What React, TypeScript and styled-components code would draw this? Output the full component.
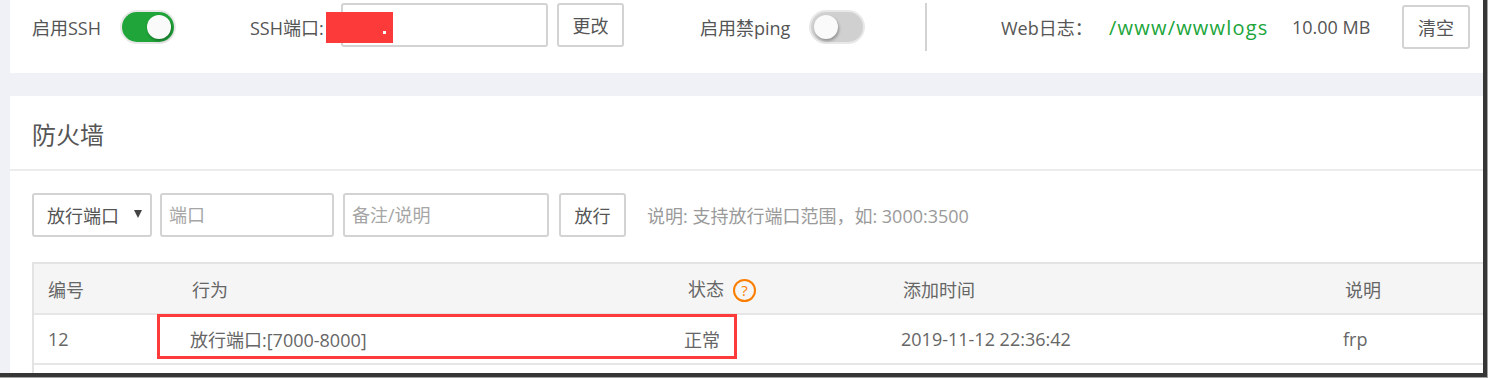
import React from 'react';
import styled, { createGlobalStyle } from 'styled-components';

const Global = createGlobalStyle`
  html, body { margin: 0; padding: 0; }
  body {
    background: #a3a3a3;
    width: 1488px;
    height: 378px;
    overflow: hidden;
    font-family: "Open Sans", "Noto Sans CJK SC", sans-serif;
  }
`;

const Screen = styled.div`
  position: relative;
  box-sizing: border-box;
  width: 1487px;
  height: 377px;
  border-right: 4px solid #363636;
  border-bottom: 4px solid #363636;
  background: #f0f1f6;
  padding-left: 10px;
  display: flex;
  flex-direction: column;
  gap: 23px;
  overflow: hidden;
`;

const TopCard = styled.div`
  box-sizing: border-box;
  height: 73px;
  flex-shrink: 0;
  background: #fff;
  padding: 3px 0 22px 22px;
  display: flex;
  align-items: center;
`;

const Label = styled.span<{ $w: number; $ml?: number; $color?: string; $ls?: number; $size?: number }>`
  flex-shrink: 0;
  width: ${(p) => p.$w}px;
  margin-left: ${(p) => p.$ml ?? 0}px;
  font-size: ${(p) => p.$size ?? 18}px;
  letter-spacing: ${(p) => p.$ls ?? 0}px;
  color: ${(p) => p.$color ?? '#555'};
  white-space: nowrap;
`;

const Toggle = styled.span<{ $on?: boolean }>`
  position: relative;
  flex-shrink: 0;
  box-sizing: border-box;
  width: 52px;
  height: 30px;
  border-radius: 15px;
  background: ${(p) => (p.$on ? '#20a53a' : '#d0d0d0')};
  box-shadow: 0 0 0 2px #e8e8e8;
  &::after {
    content: '';
    position: absolute;
    top: 3px;
    left: ${(p) => (p.$on ? '25px' : '3px')};
    width: 24px;
    height: 24px;
    border-radius: 50%;
    background: #fafafa;
    box-shadow: 1px 2px 3px rgba(0, 0, 0, 0.3);
  }
`;

const Input = styled.input<{ $w: number; $ml?: number; $raise?: boolean }>`
  flex-shrink: 0;
  box-sizing: border-box;
  width: ${(p) => p.$w}px;
  height: 44px;
  margin-left: ${(p) => p.$ml ?? 0}px;
  margin-top: ${(p) => (p.$raise ? '-4px' : '0')};
  border: 2px solid #d3d3d3;
  border-radius: 3px;
  padding: 0 7px;
  font-family: inherit;
  font-size: 18px;
  color: #555;
  background: #fff;
  outline: none;
  &::placeholder { color: #a6a6a6; }
`;

const Button = styled.button<{ $w: number; $ml?: number; $raise?: boolean }>`
  flex-shrink: 0;
  box-sizing: border-box;
  width: ${(p) => p.$w}px;
  height: 44px;
  margin-left: ${(p) => p.$ml ?? 0}px;
  margin-top: ${(p) => (p.$raise ? '-4px' : '0')};
  border: 2px solid #d3d3d3;
  border-radius: 3px;
  background: #fff;
  font-family: inherit;
  font-size: 18px;
  color: #555;
  padding: 0;
`;

const Divider = styled.span<{ $ml: number }>`
  flex-shrink: 0;
  width: 2px;
  height: 48px;
  margin-left: ${(p) => p.$ml}px;
  background: #d2d2d2;
`;

const Panel = styled.div`
  flex: 1;
  background: #fff;
  display: flex;
  flex-direction: column;
  overflow: hidden;
`;

const Title = styled.div`
  box-sizing: border-box;
  height: 75px;
  flex-shrink: 0;
  padding: 2px 0 0 22px;
  border-bottom: 2px solid #ececec;
  display: flex;
  align-items: center;
  font-size: 24px;
  color: #555;
`;

const PanelBody = styled.div`
  padding: 22px 0 0 22px;
  display: flex;
  flex-direction: column;
  gap: 25px;
`;

const FormRow = styled.div`
  display: flex;
  align-items: center;
  height: 44px;
`;

const Select = styled.div`
  flex-shrink: 0;
  box-sizing: border-box;
  width: 120px;
  height: 44px;
  border: 2px solid #d3d3d3;
  border-radius: 3px;
  padding: 0 8px 0 13px;
  display: flex;
  align-items: center;
  justify-content: space-between;
  font-size: 18px;
  color: #555;
`;

const Caret = styled.span`
  width: 0;
  height: 0;
  border-left: 4.5px solid transparent;
  border-right: 4.5px solid transparent;
  border-top: 8px solid #444;
  margin-bottom: 2px;
`;

const Hint = styled.span`
  margin-left: 21px;
  font-size: 18px;
  color: #9a9a9a;
  white-space: nowrap;
`;

const Table = styled.table`
  border-collapse: separate;
  border-spacing: 0;
  table-layout: fixed;
  width: 1499px;
  border-left: 2px solid #e3e3e3;
  border-top: 2px solid #e3e3e3;
  font-size: 18px;
  color: #666;
`;

const Th = styled.th`
  height: 49px;
  padding: 0 14px;
  background: #f5f5f5;
  border-bottom: 2px solid #e6e6e6;
  text-align: left;
  font-weight: normal;
  white-space: nowrap;
`;

const Td = styled.td<{ $pl?: number }>`
  height: 48px;
  padding: 0 14px 0 ${(p) => p.$pl ?? 14}px;
  border-bottom: 2px solid #e6e6e6;
  white-space: nowrap;
`;

const Ask = styled.span`
  display: inline-flex;
  align-items: center;
  justify-content: center;
  box-sizing: border-box;
  width: 23px;
  height: 23px;
  margin-left: 9px;
  border: 2px solid #fb7d00;
  border-radius: 50%;
  color: #fb7d00;
  font-size: 15px;
  line-height: 1;
  vertical-align: middle;
`;

const Redact = styled.div`
  position: absolute;
  left: 326px;
  top: 12px;
  width: 67px;
  height: 31px;
  background: #fc3a3a;
  &::after {
    content: '';
    position: absolute;
    left: 57px;
    top: 19px;
    width: 3px;
    height: 3px;
    background: #fff;
  }
`;

const Highlight = styled.div`
  position: absolute;
  left: 157px;
  top: 314px;
  width: 580px;
  height: 45px;
  box-sizing: border-box;
  border: 3px solid #fd3b3b;
  pointer-events: none;
`;

export default function App() {
  return (
    <>
      <Global />
      <Screen>
        <TopCard>
          <Label $w={90}>启用SSH</Label>
          <Toggle $on />
          <Label $w={91} $ml={76}>SSH端口:</Label>
          <Input $w={207} $raise defaultValue="" />
          <Button $w={67} $ml={9} $raise>更改</Button>
          <Label $w={111} $ml={76}>启用禁ping</Label>
          <Toggle />
          <Divider $ml={62} />
          <Label $w={108} $ml={74}>Web日志：</Label>
          <Label $w={183} $color="#20a53a" $size={20} $ls={1.2}>/www/wwwlogs</Label>
          <Label $w={110}>10.00 MB</Label>
          <Button $w={68}>清空</Button>
        </TopCard>
        <Panel>
          <Title>防火墙</Title>
          <PanelBody>
            <FormRow>
              <Select>
                放行端口
                <Caret />
              </Select>
              <Input $w={174} $ml={8} placeholder="端口" />
              <Input $w={206} $ml={9} placeholder="备注/说明" />
              <Button $w={67} $ml={10}>放行</Button>
              <Hint>说明: 支持放行端口范围，如: 3000:3500</Hint>
            </FormRow>
            <Table>
              <colgroup>
                <col style={{ width: 144 }} />
                <col style={{ width: 496 }} />
                <col style={{ width: 215 }} />
                <col style={{ width: 442 }} />
                <col style={{ width: 200 }} />
              </colgroup>
              <thead>
                <tr>
                  <Th>编号</Th>
                  <Th>行为</Th>
                  <Th>
                    状态<Ask>?</Ask>
                  </Th>
                  <Th>添加时间</Th>
                  <Th>说明</Th>
                </tr>
              </thead>
              <tbody>
                <tr>
                  <Td>12</Td>
                  <Td $pl={12}>放行端口:[7000-8000]</Td>
                  <Td $pl={10}>正常</Td>
                  <Td $pl={12}>2019-11-12 22:36:42</Td>
                  <Td $pl={12}>frp</Td>
                </tr>
                <tr>
                  <Td />
                  <Td />
                  <Td />
                  <Td />
                  <Td />
                </tr>
              </tbody>
            </Table>
          </PanelBody>
        </Panel>
        <Redact />
        <Highlight />
      </Screen>
    </>
  );
}
